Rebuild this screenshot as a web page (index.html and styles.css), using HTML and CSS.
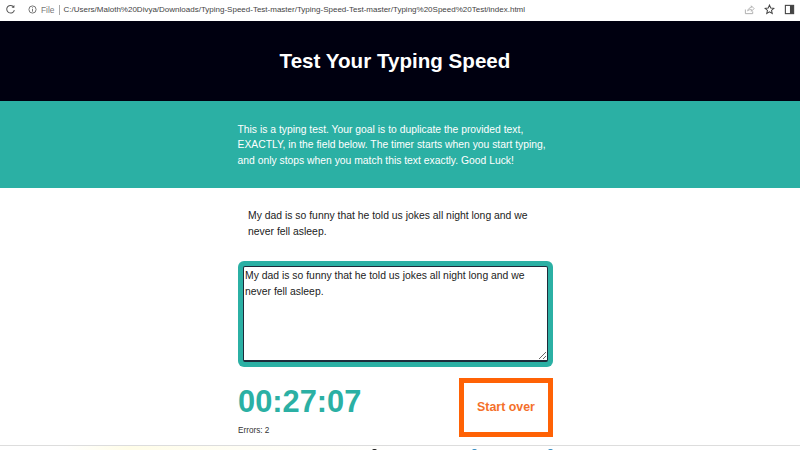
FILE: index.html
```html
<!DOCTYPE html>
<html lang="en">
<head>
<meta charset="utf-8">
<title>Test Your Typing Speed</title>
<link rel="stylesheet" href="styles.css">
</head>
<body>
<div class="toolbar">
  <svg class="reload" viewBox="0 0 12 12" width="11" height="11"><path d="M9.6 3.4A4.2 4.2 0 1 0 10.2 6.6" fill="none" stroke="#555" stroke-width="1.1"/><path d="M10.2 1.2v3h-3z" fill="#555"/></svg>
  <svg class="info" viewBox="0 0 10 10" width="9" height="9"><circle cx="5" cy="5" r="4" fill="none" stroke="#666" stroke-width="1"/><path d="M5 4.4v3M5 2.6v1" stroke="#666" stroke-width="1"/></svg>
  <span class="scheme">File</span>
  <span class="sep"></span>
  <span class="url">C:/Users/Maloth%20Divya/Downloads/Typing-Speed-Test-master/Typing-Speed-Test-master/Typing%20Speed%20Test/index.html</span>
  <div class="tools">
    <svg viewBox="0 0 12 12" width="11" height="11"><path d="M1.5 6v4.5h8V8M4 7.5C4.5 5 6.5 3.8 8 3.8V2l3 3-3 3V6C6.5 6 5 6.4 4 7.5z" fill="none" stroke="#aaa" stroke-width="1"/></svg>
    <svg viewBox="0 0 12 12" width="11" height="11"><path d="M6 1.2l1.4 3.2 3.4.3-2.6 2.2.8 3.4L6 8.5l-3 1.8.8-3.4L1.2 4.7l3.4-.3z" fill="none" stroke="#444" stroke-width="1.1"/></svg>
    <svg viewBox="0 0 12 12" width="11" height="11"><rect x="1.5" y="1.5" width="9" height="9" fill="none" stroke="#444" stroke-width="1.2"/><rect x="6.5" y="1.5" width="4" height="9" fill="#444"/></svg>
  </div>
</div>
<header class="masthead"><h1>Test Your Typing Speed</h1></header>
<section class="intro">
  <p>This is a typing test. Your goal is to duplicate the provided text, EXACTLY, in the field below. The timer starts when you start typing, and only stops when you match this text exactly. Good Luck!</p>
</section>
<main class="main">
  <p class="origin">My dad is so funny that he told us jokes all night long and we never fell asleep.</p>
  <div class="well"><textarea class="field" spellcheck="false">My dad is so funny that he told us jokes all night long and we never fell asleep.</textarea></div>
  <div class="meta">
    <div class="stats">
      <div class="timer">00:27:07</div>
      <div class="errors">Errors: 2</div>
    </div>
    <button class="reset" type="button">Start over</button>
  </div>
</main>
<div class="strip"><i class="mark mark-dark"></i><i class="mark mark-blue-a"></i><i class="mark mark-blue-b"></i></div>
</body>
</html>
```
FILE: styles.css
```css
* { box-sizing: border-box; }
html, body { margin: 0; height: 450px; overflow: hidden; }
body { font-family: "Liberation Sans", Arial, sans-serif; background: #fff; color: #222; display: flex; flex-direction: column; }
.toolbar { height: 21px; flex: none; display: flex; align-items: center; padding: 0 5px 2px 5px; background: #fff; font-size: 8.4px; color: #444; }
.info { margin-left: 12px; }
.scheme { margin-left: 4px; color: #777; }
.sep { width: 1px; height: 10px; background: #aaa; margin: 0 4px; }
.url { color: #444; white-space: nowrap; font-family: "Liberation Sans", Arial, sans-serif; font-size: 8px; }
.tools { margin-left: auto; display: flex; gap: 9px; align-items: center; }
.masthead { height: 80px; flex: none; background: #000010; display: flex; align-items: center; justify-content: center; padding-right: 10px; }
.masthead h1 { margin: 0; color: #fff; font-size: 20.6px; font-weight: 700; }
.intro { height: 87px; flex: none; background: #2bb0a4; display: flex; justify-content: center; padding: 21px 10px 0 0; }
.intro p { margin: 0; width: 315px; color: #fff; font-size: 10.35px; line-height: 15.3px; }
.main { width: 315px; margin: 0 0 0 238px; flex: none; }
.origin { margin: 0; padding: 20px 10px 0; height: 73px; font-size: 10.4px; line-height: 16px; color: #222; }
.well { height: 106px; background: #2bb0a4; border-radius: 6px; padding: 5px; }
.field { display: block; width: 100%; height: 100%; margin: 0; padding: 1px; background: #fff; border: 1px solid #1d2b3a; border-bottom-width: 2px; border-radius: 2px; font-family: "Liberation Sans", Arial, sans-serif; font-size: 10.4px; line-height: 16px; color: #222; outline: none; }
.meta { display: flex; justify-content: space-between; margin-top: 11px; }
.timer { font-size: 30.8px; font-weight: 700; color: #2bb0a4; line-height: 36px; margin-top: 6px; }
.errors { font-size: 8.2px; color: #333; margin-top: 6px; }
.reset { width: 94px; height: 59px; background: #fff; border: 5px solid #ff6205; color: #f4702a; font: 700 12.4px "Liberation Sans", Arial, sans-serif; padding: 0 0 2px; }
.strip { position: relative; margin-top: auto; height: 5px; border-top: 1px solid #ddd; background: linear-gradient(90deg, #fff 8%, #fffde8 16%, #fffef5 30%, #fff 50%); }
.mark { position: absolute; top: 3px; height: 2px; width: 5px; border-radius: 2px 2px 0 0; }
.mark-dark { left: 372px; background: #222; }
.mark-blue-a { left: 472px; background: #3a8fc4; }
.mark-blue-b { left: 548px; background: #3a8fc4; }
```
